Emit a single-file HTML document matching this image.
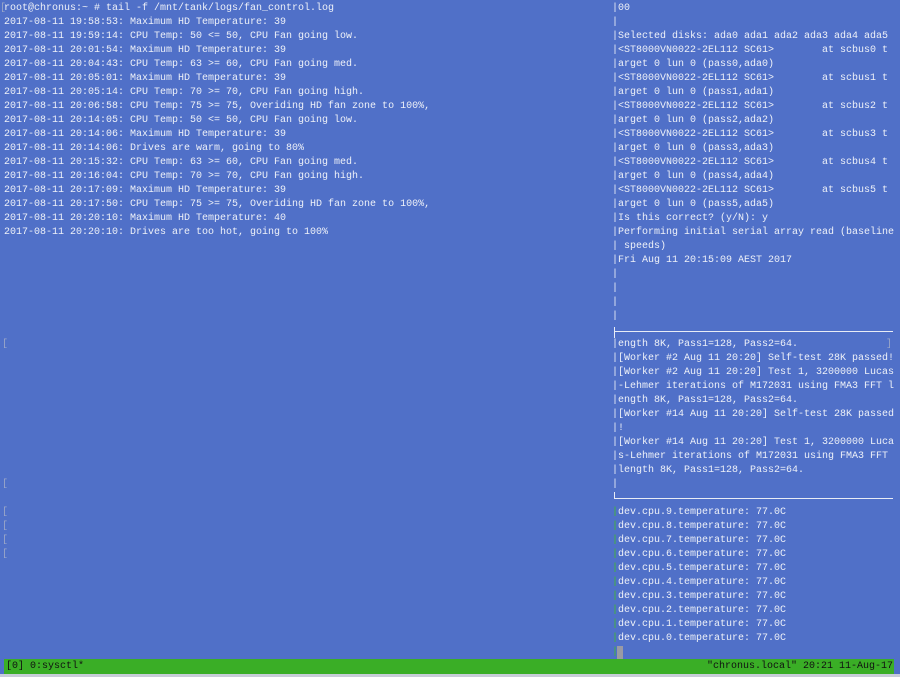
<!DOCTYPE html>
<html><head><style>
html,body{margin:0;padding:0;width:900px;height:677px;overflow:hidden;background:#5070c8;}
.t{position:absolute;font-family:"Liberation Mono",monospace;font-size:10px;line-height:14px;color:#eef1f8;white-space:pre;}
.g{color:#3fbf2a}
.d{color:#9aa6c8}
.hs{position:absolute;left:615px;width:278px;height:1px;background:#e8ecf6;}
.hs2{position:absolute;left:614px;width:1px;height:7px;background:#e8ecf6;}
#status{position:absolute;left:4px;top:659px;width:890px;height:15px;background:#3aae26;}
.s{position:absolute;font-family:"Liberation Mono",monospace;font-size:10px;line-height:14px;color:#111;white-space:pre;top:660px;}
#edge{position:absolute;left:0;top:674px;width:900px;height:3px;background:#c8cdd8;}
</style></head><body>
<div class="t" style="left:4px;top:2px">root@chronus:~ # tail -f /mnt/tank/logs/fan_control.log
2017-08-11 19:58:53: Maximum HD Temperature: 39
2017-08-11 19:59:14: CPU Temp: 50 &lt;= 50, CPU Fan going low.
2017-08-11 20:01:54: Maximum HD Temperature: 39
2017-08-11 20:04:43: CPU Temp: 63 &gt;= 60, CPU Fan going med.
2017-08-11 20:05:01: Maximum HD Temperature: 39
2017-08-11 20:05:14: CPU Temp: 70 &gt;= 70, CPU Fan going high.
2017-08-11 20:06:58: CPU Temp: 75 &gt;= 75, Overiding HD fan zone to 100%,
2017-08-11 20:14:05: CPU Temp: 50 &lt;= 50, CPU Fan going low.
2017-08-11 20:14:06: Maximum HD Temperature: 39
2017-08-11 20:14:06: Drives are warm, going to 80%
2017-08-11 20:15:32: CPU Temp: 63 &gt;= 60, CPU Fan going med.
2017-08-11 20:16:04: CPU Temp: 70 &gt;= 70, CPU Fan going high.
2017-08-11 20:17:09: Maximum HD Temperature: 39
2017-08-11 20:17:50: CPU Temp: 75 &gt;= 75, Overiding HD fan zone to 100%,
2017-08-11 20:20:10: Maximum HD Temperature: 40
2017-08-11 20:20:10: Drives are too hot, going to 100%</div>
<div class="t d" style="left:0px;top:2px">[</div>
<div class="t d" style="left:2px;top:338px">[</div>
<div class="t d" style="left:2px;top:478px">[</div>
<div class="t d" style="left:2px;top:506px">[
[
[
[</div>
<div class="t d" style="left:886px;top:338px">]</div>
<div class="t" style="left:612px;top:2px">|00
|
|Selected disks: ada0 ada1 ada2 ada3 ada4 ada5
|&lt;ST8000VN0022-2EL112 SC61&gt;        at scbus0 t
|arget 0 lun 0 (pass0,ada0)
|&lt;ST8000VN0022-2EL112 SC61&gt;        at scbus1 t
|arget 0 lun 0 (pass1,ada1)
|&lt;ST8000VN0022-2EL112 SC61&gt;        at scbus2 t
|arget 0 lun 0 (pass2,ada2)
|&lt;ST8000VN0022-2EL112 SC61&gt;        at scbus3 t
|arget 0 lun 0 (pass3,ada3)
|&lt;ST8000VN0022-2EL112 SC61&gt;        at scbus4 t
|arget 0 lun 0 (pass4,ada4)
|&lt;ST8000VN0022-2EL112 SC61&gt;        at scbus5 t
|arget 0 lun 0 (pass5,ada5)
|Is this correct? (y/N): y
|Performing initial serial array read (baseline
| speeds)
|Fri Aug 11 20:15:09 AEST 2017
|
|
|
|</div>
<div class="hs" style="top:331px"></div><div class="hs2" style="top:327px"></div><div class="hs2" style="top:331px"></div>
<div class="t" style="left:612px;top:338px">|ength 8K, Pass1=128, Pass2=64.
|[Worker #2 Aug 11 20:20] Self-test 28K passed!
|[Worker #2 Aug 11 20:20] Test 1, 3200000 Lucas
|-Lehmer iterations of M172031 using FMA3 FFT l
|ength 8K, Pass1=128, Pass2=64.
|[Worker #14 Aug 11 20:20] Self-test 28K passed
|!
|[Worker #14 Aug 11 20:20] Test 1, 3200000 Luca
|s-Lehmer iterations of M172031 using FMA3 FFT
|length 8K, Pass1=128, Pass2=64.
|</div>
<div class="hs" style="top:498px"></div><div class="hs2" style="top:492px"></div>
<div class="t" style="left:612px;top:506px"><span class="g">|</span>dev.cpu.9.temperature: 77.0C
<span class="g">|</span>dev.cpu.8.temperature: 77.0C
<span class="g">|</span>dev.cpu.7.temperature: 77.0C
<span class="g">|</span>dev.cpu.6.temperature: 77.0C
<span class="g">|</span>dev.cpu.5.temperature: 77.0C
<span class="g">|</span>dev.cpu.4.temperature: 77.0C
<span class="g">|</span>dev.cpu.3.temperature: 77.0C
<span class="g">|</span>dev.cpu.2.temperature: 77.0C
<span class="g">|</span>dev.cpu.1.temperature: 77.0C
<span class="g">|</span>dev.cpu.0.temperature: 77.0C
<span class="g">|</span></div>
<div style="position:absolute;left:617px;top:646px;width:6px;height:13px;background:#9a9aa4"></div>
<div id="status"></div>
<div class="s" style="left:6px">[0] 0:sysctl*</div>
<div class="s" style="left:707px">"chronus.local" 20:21 11-Aug-17</div>
<div id="edge"></div>
</body></html>
